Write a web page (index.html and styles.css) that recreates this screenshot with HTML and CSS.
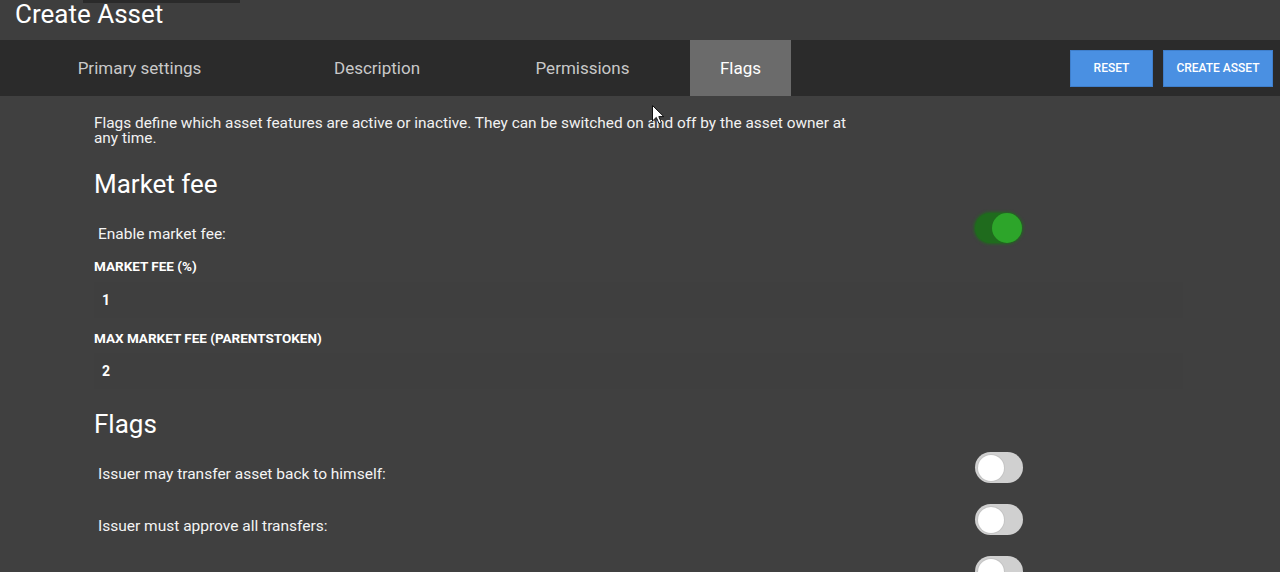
FILE: index.html
```html
<!DOCTYPE html>
<html lang="en">
<head>
<meta charset="utf-8">
<title>Create Asset</title>
<link rel="stylesheet" href="styles.css">
</head>
<body>
<header class="page-header">
  <div class="top-strip"></div>
  <h1 class="page-title">Create Asset</h1>
</header>
<nav class="tabbar">
  <div class="tabs">
    <div class="tab tab-primary">Primary settings</div>
    <div class="tab tab-description">Description</div>
    <div class="tab tab-permissions">Permissions</div>
    <div class="tab tab-flags active">Flags</div>
  </div>
  <div class="actions">
    <button class="btn btn-reset">RESET</button>
    <button class="btn btn-create">CREATE ASSET</button>
  </div>
</nav>
<main class="content">
  <p class="intro">Flags define which asset features are active or inactive. They can be switched on and off by the asset owner at any time.</p>
  <h2 class="section-title first">Market fee</h2>
  <div class="toggle-row first-row">
    <span class="toggle-label">Enable market fee:</span>
    <span class="toggle on"><span class="knob"></span></span>
  </div>
  <div class="field-label lbl-fee">MARKET FEE (%)</div>
  <div class="field">1</div>
  <div class="field-label lbl-max">MAX MARKET FEE (PARENTSTOKEN)</div>
  <div class="field field-max">2</div>
  <h2 class="section-title second">Flags</h2>
  <div class="flag-list">
    <div class="toggle-row">
      <span class="toggle-label">Issuer may transfer asset back to himself:</span>
      <span class="toggle off"><span class="knob"></span></span>
    </div>
    <div class="toggle-row">
      <span class="toggle-label">Issuer must approve all transfers:</span>
      <span class="toggle off"><span class="knob"></span></span>
    </div>
    <div class="toggle-row">
      <span class="toggle-label">Disable confidential transactions:</span>
      <span class="toggle off"><span class="knob"></span></span>
    </div>
  </div>
</main>
<svg class="cursor" width="13" height="20" viewBox="0 0 13 20" aria-hidden="true">
  <path d="M0.5 0.5 L0.5 16 L4.3 12.4 L7 18.6 L9.4 17.6 L6.8 11.6 L11.8 11.6 Z" fill="#fff" stroke="#111" stroke-width="1" stroke-linejoin="round"/>
</svg>
</body>
</html>
```
FILE: styles.css
```css
* { box-sizing: border-box; }
html, body {
  margin: 0;
  padding: 0;
}
body {
  background: #404040;
  font-family: Roboto, "Noto Sans", "Liberation Sans", sans-serif;
  color: #fff;
  width: 1280px;
  height: 572px;
  overflow: hidden;
  position: relative;
}
.page-header {
  height: 40px;
  background: #3e3e3e;
  position: relative;
}
.top-strip {
  position: absolute;
  left: 83px;
  top: 0;
  width: 157px;
  height: 3px;
  background: #2a2a2a;
}
.page-title {
  margin: 0;
  padding-left: 15px;
  font-size: 26px;
  font-weight: 400;
  line-height: 28px;
  color: #fff;
}
.tabbar {
  height: 56px;
  background: #2b2b2b;
  display: flex;
  align-items: stretch;
  justify-content: space-between;
}
.tabs {
  display: flex;
  align-items: stretch;
}
.tab {
  display: flex;
  align-items: center;
  justify-content: center;
  font-size: 17px;
  color: #c9c9c9;
  flex: none;
}
.tab-primary { margin-left: 48px; width: 183px; }
.tab-description { margin-left: 73px; width: 146px; }
.tab-permissions { margin-left: 56px; width: 153px; }
.tab-flags { margin-left: 31px; width: 101px; }
.tab.active {
  background: #6b6b6b;
  color: #fff;
}
.actions {
  display: flex;
  align-items: center;
  gap: 10px;
  padding-right: 7px;
}
.btn {
  height: 37px;
  background: #4a90e2;
  border: 1px solid #3f7fcc;
  color: #fff;
  font-family: Roboto, "Liberation Sans", sans-serif;
  font-size: 12px;
  font-weight: 500;
  padding: 0;
}
.btn-reset { width: 83px; }
.btn-create { width: 110px; }
.content {
  padding-left: 94px;
}
.intro {
  margin: 20px 0 0;
  width: 760px;
  font-size: 15.4px;
  line-height: 15px;
  color: #f2f2f2;
}
.section-title {
  margin: 0;
  font-size: 26px;
  font-weight: 400;
  line-height: 30px;
  color: #fff;
}
.section-title.first { margin-top: 23px; }
.section-title.second { margin-top: 20px; }
.toggle-row {
  width: 928px;
  display: flex;
  justify-content: space-between;
  align-items: flex-start;
  height: 31px;
}
.first-row { margin-top: 14px; height: 30px; }
.toggle-label {
  padding-left: 4px;
  padding-top: 12px;
  font-size: 15.5px;
  line-height: 18px;
  color: #f4f4f4;
}
.flag-list {
  margin-top: 13px;
  display: flex;
  flex-direction: column;
  gap: 21px;
}
.flag-list .toggle-label { padding-top: 13px; }
.toggle {
  position: relative;
  flex: none;
  width: 48px;
  height: 31px;
  border-radius: 16px;
}
.toggle.off {
  background: #d0d0d0;
  margin-right: -1px;
}
.toggle.off .knob {
  position: absolute;
  left: 3px;
  top: 2.5px;
  width: 26px;
  height: 26px;
  border-radius: 50%;
  background: #fff;
  box-shadow: 0 0 0 1px #c4c4c4;
}
.toggle.on {
  width: 47px;
  height: 30px;
  background: #1f6b1d;
  box-shadow: 0 0 3px 1px #1f6b1d;
}
.toggle.on .knob {
  position: absolute;
  right: 0;
  top: 0;
  width: 30px;
  height: 30px;
  border-radius: 50%;
  background: #2da52a;
}
.field-label {
  font-size: 13.5px;
  font-weight: 700;
  line-height: 16px;
  color: #fff;
}
.lbl-fee { margin-top: 15px; }
.lbl-max { margin-top: 12px; }
.field {
  margin-top: 8px;
  width: 1089px;
  height: 36px;
  line-height: 36px;
  padding-left: 8px;
  font-size: 14px;
  font-weight: 700;
  background: #3f3f3f;
  color: #fff;
}
.field-max { margin-top: 7px; }
.cursor {
  position: absolute;
  left: 652px;
  top: 105px;
}
```
